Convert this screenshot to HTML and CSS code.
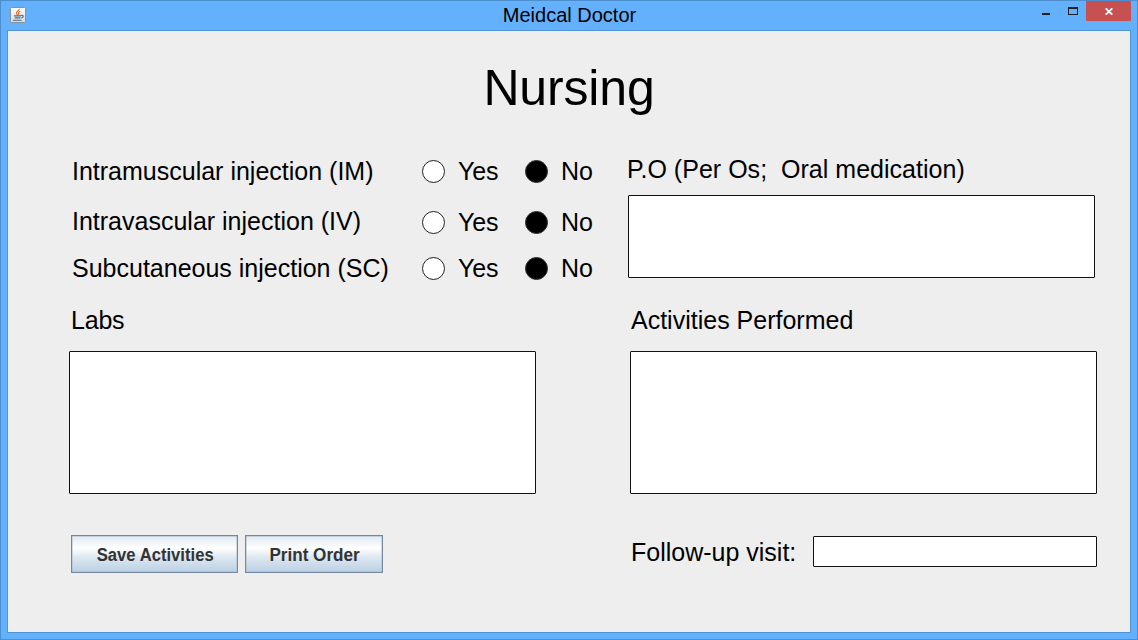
FILE: index.html
```html
<!DOCTYPE html>
<html lang="en">
<head>
<meta charset="utf-8">
<title>Meidcal Doctor</title>
<link rel="stylesheet" href="styles.css">
</head>
<body>
<div class="window">
  <header class="titlebar">
    <svg class="app-icon" width="16" height="16" viewBox="0 0 16 16">
      <defs><linearGradient id="tile" x1="0" y1="0" x2="0" y2="1"><stop offset="0" stop-color="#fff"/><stop offset="1" stop-color="#d3d8db"/></linearGradient></defs>
      <rect x=".5" y=".5" width="15" height="15" rx="1" fill="url(#tile)" stroke="#8b9298"/>
      <path d="M9.3 1.8C9.6 3.7 6 4.4 6.5 6.2C6.7 7 7.2 7.5 7.6 8.3M10.3 4.2C8.3 5 8.2 5.8 8.8 6.6C9.1 7.2 8.8 7.7 8.4 8.2" fill="none" stroke="#e8702a" stroke-width="1.2"/>
      <path d="M4 8.9H11M4.8 10.9H10.4M3 13.2H11.5M11 8.6C14 7.6 14 10.4 11.2 11" fill="none" stroke="#45708f" stroke-width="1.1"/>
    </svg>
    <div class="caption">Meidcal Doctor</div>
    <div class="controls">
      <svg class="glyphs" width="56" height="21" viewBox="0 0 56 21" shape-rendering="crispEdges">
        <rect x="12" y="13" width="8" height="2" fill="#222"/>
        <path d="M38 7H48V15H38ZM39 9V14H47V9Z" fill="#222" fill-rule="evenodd"/>
      </svg>
      <div class="close">
        <svg width="8" height="7" viewBox="0 0 8 7"><path d="M.7 .3L7.3 6.7M7.3 .3L.7 6.7" stroke="#fff" stroke-width="1.8"/></svg>
      </div>
    </div>
  </header>
  <main class="client">
    <h1 class="heading">Nursing</h1>
    <div class="columns">
      <section class="left">
        <div class="question"><span class="name">Intramuscular injection (IM)</span><i class="radio"></i><span class="yes">Yes</span><i class="radio on"></i><span class="no">No</span></div>
        <div class="question second"><span class="name">Intravascular injection (IV)</span><i class="radio"></i><span class="yes">Yes</span><i class="radio on"></i><span class="no">No</span></div>
        <div class="question third"><span class="name">Subcutaneous injection (SC)</span><i class="radio"></i><span class="yes">Yes</span><i class="radio on"></i><span class="no">No</span></div>
        <div class="label labs">Labs</div>
        <div class="field area"></div>
        <div class="buttons">
          <button class="button save"><span>Save Activities</span></button>
          <button class="button print"><span>Print Order</span></button>
        </div>
      </section>
      <section class="right">
        <div class="label oral">P.O (Per Os;&nbsp; Oral medication)</div>
        <div class="field medication"></div>
        <div class="label performed">Activities Performed</div>
        <div class="field area activities"></div>
        <div class="follow"><span class="label">Follow-up visit:</span><div class="field visit"></div></div>
      </section>
    </div>
  </main>
</div>
</body>
</html>
```
FILE: styles.css
```css
* { box-sizing: border-box; }
body { margin: 0; font-family: "Liberation Sans", Arial, sans-serif; color: #000; }
.window { width: 1138px; height: 640px; background: #63b1fd; border: 1px solid #4c8fce; padding: 0 6px 6px; }
.titlebar { height: 29px; display: grid; grid-template-columns: 1fr auto 1fr; align-items: start; margin-right: -1px; }
.app-icon { margin: 6px 0 0 3px; }
.caption { font-size: 20px; line-height: 28px; white-space: nowrap; }
.controls { display: flex; justify-content: flex-end; margin-top: -1px; margin-right: 1px; }
.close { width: 45px; height: 20px; margin-top: 1px; background: #c75050; display: flex; align-items: center; justify-content: center; }
.client { height: 603px; background: #eee; border: 1px solid #5094d5; }
.heading { margin: 28px 0 0; text-align: center; font-size: 50px; line-height: 58px; font-weight: 400; letter-spacing: -.15px; }
.columns { display: grid; grid-template-columns: 559px 1fr; padding: 37px 33px 0 61px; font-size: 25px; line-height: 30px; }
.left, .right { white-space: nowrap; }
.question { display: grid; grid-template-columns: 350px 36px 67px 36px 40px; height: 30px; padding-left: 3px; margin-top: 2px; }
.question.second { margin-top: 20px; height: 31px; }
.question.third { margin-top: 16px; }
.second .yes, .second .no, .second .radio { margin-top: 1px; }
.yes { letter-spacing: -.15px; }
.radio { width: 23px; height: 23px; margin-top: 4px; border: 1px solid #222; border-radius: 50%; background: #fff; }
.second .radio { margin-top: 5px; }
.radio.on { background: #000; border-color: #333; }
.label { height: 30px; }
.labs { margin: 22px 0 16px 2px; letter-spacing: -.2px; }
.field { background: #fff; border: 1px solid #111; border-radius: 1px; }
.area { width: 467px; height: 143px; }
.buttons { display: flex; gap: 7px; margin: 41px 0 0 2px; }
.button { height: 38px; padding: 0; border: 1.5px solid #74899d; box-shadow: inset 0 0 0 .5px #a9b9c8; background: linear-gradient(#dfeaf4, #fff 34%, #dce7f1 60%, #bbd0e4); color: #333; font: bold 18px/32px "Liberation Sans", Arial, sans-serif; display: flex; justify-content: center; align-items: center; }
.button span { display: block; margin: 2px 0 0 2px; }
.save { width: 167px; }
.save span { transform: scaleX(.925); }
.print { width: 138px; }
.print span { transform: scaleX(.95); }
.oral { margin-left: -1px; letter-spacing: .02px; }
.medication { width: 467px; height: 83px; margin-top: 11px; }
.performed { margin: 27px 0 16px 3px; }
.activities { margin-left: 2px; }
.follow { display: flex; justify-content: space-between; width: 466px; margin: 42px 0 0 3px; }
.follow .label { margin-top: 1px; }
.visit { width: 284px; height: 31px; }
```
